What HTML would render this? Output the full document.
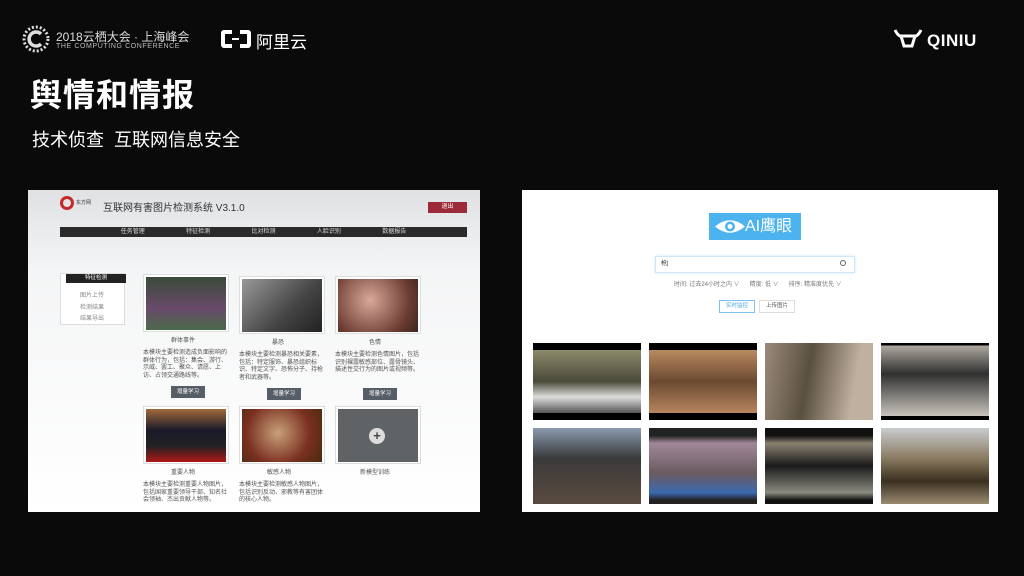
<!DOCTYPE html><html><head><meta charset="utf-8"><style>
*{margin:0;padding:0;box-sizing:border-box}
body{width:1024px;height:576px;background:#0a0a0a;position:relative;overflow:hidden;font-family:"Liberation Sans","Noto Sans CJK SC",sans-serif;color:#fff}
.a{position:absolute}
.img{position:absolute}
.t{font-size:6px;color:#555;line-height:7.5px}
</style></head><body>
<svg class="a" style="left:21px;top:24px" width="30" height="30" viewBox="0 0 30 30"><g fill="#ddd"><circle cx="15" cy="15" r="12" fill="none" stroke="#ddd" stroke-width="3" stroke-dasharray="2 2"/><path d="M20 10 A7 7 0 1 0 20 20" stroke="#ddd" stroke-width="3.5" fill="none"/></g></svg>
<div class="a" style="left:56px;top:28px;font-size:12px;color:#ddd">2018云栖大会 · 上海峰会</div>
<div class="a" style="left:56px;top:43px;font-size:7px;color:#bbb;letter-spacing:0.6px">THE COMPUTING CONFERENCE</div>
<div class="a" style="left:221px;top:30px;width:30px;height:18px;border:4px solid #fff;border-radius:3px"></div>
<div class="a" style="left:232px;top:26px;width:8px;height:26px;background:#0a0a0a"></div>
<div class="a" style="left:232px;top:38px;width:7px;height:2px;background:#fff"></div>
<div class="a" style="left:256px;top:28px;font-size:17px">阿里云</div>
<svg class="a" style="left:893px;top:28px" width="30" height="22" viewBox="0 0 30 22"><path d="M2 2 Q6 10 10 8 M28 2 Q24 10 20 8 M8 8 H22 L19 18 H11 Z" stroke="#fff" stroke-width="3" fill="none"/></svg>
<div class="a" style="left:927px;top:31px;font-size:17px;font-weight:bold;letter-spacing:0.5px">QINIU</div>
<div class="a" style="left:30px;top:70px;font-size:32px;font-weight:bold;letter-spacing:1px">舆情和情报</div>
<div class="a" style="left:32px;top:126px;font-size:18px">技术侦查&nbsp;&nbsp;互联网信息安全</div>

<div class="a" style="left:28px;top:190px;width:452px;height:322px;background:linear-gradient(#dfe1e3,#f4f5f6 25%,#fff)"></div>
<div class="a" style="left:60px;top:196px;width:14px;height:14px;border:3px solid #c8282a;border-radius:50%"></div>
<div class="a" style="left:76px;top:199px;font-size:5px;color:#333">东方网</div>
<div class="a" style="left:103px;top:199px;font-size:10px;color:#333">互联网有害图片检测系统 V3.1.0</div>
<div class="a" style="left:428px;top:202px;width:39px;height:11px;background:#9c2b3a;font-size:6px;color:#fff;text-align:center;line-height:11px">退出</div>
<div class="a" style="left:60px;top:227px;width:407px;height:10px;background:#2a2a2a;font-size:6px;color:#ddd;line-height:10px;display:flex;justify-content:space-around;padding:0 40px"><span>任务管理</span><span>特征检测</span><span>比对检测</span><span>人脸识别</span><span>数据报告</span></div>
<div class="a" style="left:60px;top:273px;width:65px;height:52px;border:1px solid #ddd;background:#fff"></div>
<div class="a" style="left:66px;top:274px;width:60px;height:9px;background:#222;font-size:5.5px;color:#fff;text-align:center;line-height:9px">特征检测</div>
<div class="a t" style="left:80px;top:291px;line-height:11.5px;color:#888">图片上传<br>检测结果<br>结果导出</div>
<div class="img" style="left:143px;top:274px;width:86px;height:58px;background:#fff;border:1px solid #ddd"></div>
<div class="img" style="left:146px;top:277px;width:80px;height:53px;background:linear-gradient(#3a4a3a,#6a4a6a 60%,#4a6a4a)"></div>
<div class="img" style="left:239px;top:276px;width:86px;height:58px;background:#fff;border:1px solid #ddd"></div>
<div class="img" style="left:242px;top:279px;width:80px;height:53px;background:linear-gradient(135deg,#999,#444 60%,#222)"></div>
<div class="img" style="left:335px;top:276px;width:86px;height:58px;background:#fff;border:1px solid #ddd"></div>
<div class="img" style="left:338px;top:279px;width:80px;height:53px;background:radial-gradient(circle at 40% 40%,#d9a89a,#6a3a30 70%,#3a2520)"></div>
<div class="a t" style="left:171px;top:338px">群体事件</div><div class="a t" style="left:272px;top:340px">暴恐</div><div class="a t" style="left:369px;top:340px">色情</div>
<div class="a t" style="left:143px;top:350px;width:85px">本模块主要检测造成负面影响的群体行为，包括：集会、游行、示威、罢工、聚众、请愿、上访、占领交通路线等。</div>
<div class="a t" style="left:239px;top:352px;width:85px">本模块主要检测暴恐相关要素，包括：特定服饰、暴恐组织标识、特定文字、恐怖分子、持枪者和武器等。</div>
<div class="a t" style="left:335px;top:352px;width:85px">本模块主要检测色情图片，包括识别裸露敏感部位、露骨镜头、描述性交行为的图片或视频等。</div>
<div class="a" style="left:171px;top:386px;width:34px;height:12px;background:#555d66;font-size:5.5px;color:#fff;text-align:center;line-height:12px">增量学习</div>
<div class="a" style="left:267px;top:388px;width:34px;height:12px;background:#555d66;font-size:5.5px;color:#fff;text-align:center;line-height:12px">增量学习</div>
<div class="a" style="left:363px;top:388px;width:34px;height:12px;background:#555d66;font-size:5.5px;color:#fff;text-align:center;line-height:12px">增量学习</div>
<div class="img" style="left:143px;top:406px;width:86px;height:58px;background:#fff;border:1px solid #ddd"></div>
<div class="img" style="left:146px;top:409px;width:80px;height:53px;background:linear-gradient(#a06a3a,#1a1a2a 40%,#222 70%,#b01818)"></div>
<div class="img" style="left:239px;top:406px;width:86px;height:58px;background:#fff;border:1px solid #ddd"></div>
<div class="img" style="left:242px;top:409px;width:80px;height:53px;background:radial-gradient(circle at 45% 45%,#c9a07a,#7a3020 60%,#4a2a10)"></div>
<div class="img" style="left:335px;top:406px;width:86px;height:58px;background:#fff;border:1px solid #ddd"></div>
<div class="img" style="left:338px;top:409px;width:80px;height:53px;background:#5f6365"></div>
<div class="a" style="left:369px;top:428px;width:16px;height:16px;border-radius:50%;background:#ddd;color:#444;font-size:13px;font-weight:bold;text-align:center;line-height:16px">+</div>
<div class="a t" style="left:171px;top:470px">重要人物</div><div class="a t" style="left:267px;top:470px">敏感人物</div><div class="a t" style="left:360px;top:470px">新模型训练</div>
<div class="a t" style="left:143px;top:482px;width:85px">本模块主要检测重要人物图片，包括国家重要领导干部、知名社会领袖、杰出贡献人物等。</div>
<div class="a t" style="left:239px;top:482px;width:85px">本模块主要检测敏感人物图片，包括识别反动、邪教等有害团体的核心人物。</div>

<div class="a" style="left:522px;top:190px;width:476px;height:322px;background:#fff"></div>
<div class="a" style="left:709px;top:213px;width:92px;height:27px;background:#4db3ee;font-size:16px;color:#fff;line-height:27px;padding-left:36px">AI鹰眼</div>
<svg class="a" style="left:714px;top:218px" width="32" height="17" viewBox="0 0 32 17"><path d="M1 8.5 Q16 -4 31 8.5 Q16 21 1 8.5Z" fill="#fff"/><circle cx="16" cy="8.5" r="5" fill="#4db3ee"/><circle cx="16" cy="8.5" r="2.5" fill="#fff"/></svg>
<div class="a" style="left:655px;top:256px;width:200px;height:17px;border:1px solid #cfe6f7;box-shadow:0 0 3px #cfe8fa;font-size:6px;color:#333;line-height:15px;padding-left:5px">枪|</div>
<div class="a" style="left:840px;top:260px;width:6px;height:6px;border:1px solid #666;border-radius:50%"></div>
<div class="a t" style="left:674px;top:282px;color:#777">时间: 过去24小时之内 ∨&nbsp;&nbsp;&nbsp;&nbsp;&nbsp;&nbsp;精度: 低 ∨&nbsp;&nbsp;&nbsp;&nbsp;&nbsp;&nbsp;排序: 精准度优先 ∨</div>
<div class="a" style="left:719px;top:300px;width:36px;height:13px;border:1px solid #7cc2f0;font-size:5.5px;color:#4aa8e8;text-align:center;line-height:11px">实时监控</div>
<div class="a" style="left:759px;top:300px;width:36px;height:13px;border:1px solid #ddd;font-size:5.5px;color:#555;text-align:center;line-height:11px">上传图片</div>
<div class="img" style="left:533px;top:343px;width:108px;height:77px;background:linear-gradient(#000 9%,#8b8a6a 9%,#4a4a3a 50%,#ddd 70%,#555 91%,#000 91%)"></div>
<div class="img" style="left:649px;top:343px;width:108px;height:77px;background:linear-gradient(#000 9%,#b98a60 9%,#6a4a30 50%,#b88560 91%,#000 91%)"></div>
<div class="img" style="left:765px;top:343px;width:108px;height:77px;background:linear-gradient(100deg,#9a8a7a,#5a5040 40%,#c0b0a0 80%)"></div>
<div class="img" style="left:881px;top:343px;width:108px;height:77px;background:linear-gradient(#000 3%,#b0aaa0 3%,#303030 40%,#c8c4bc 95%,#000 95%)"></div>
<div class="img" style="left:533px;top:428px;width:108px;height:76px;background:linear-gradient(#8a9ab0,#3a3a3a 40%,#5a4a40)"></div>
<div class="img" style="left:649px;top:428px;width:108px;height:76px;background:linear-gradient(#222 10%,#a08898 20%,#6a5a60 60%,#3a6ab0 85%,#222 95%)"></div>
<div class="img" style="left:765px;top:428px;width:108px;height:76px;background:linear-gradient(#111 10%,#8a8070 20%,#1a1a1a 50%,#8a8a80 85%,#111 95%)"></div>
<div class="img" style="left:881px;top:428px;width:108px;height:76px;background:linear-gradient(#c8ccd0,#8a7a60 40%,#3a3020 70%,#9a8a70)"></div>
</body></html>
